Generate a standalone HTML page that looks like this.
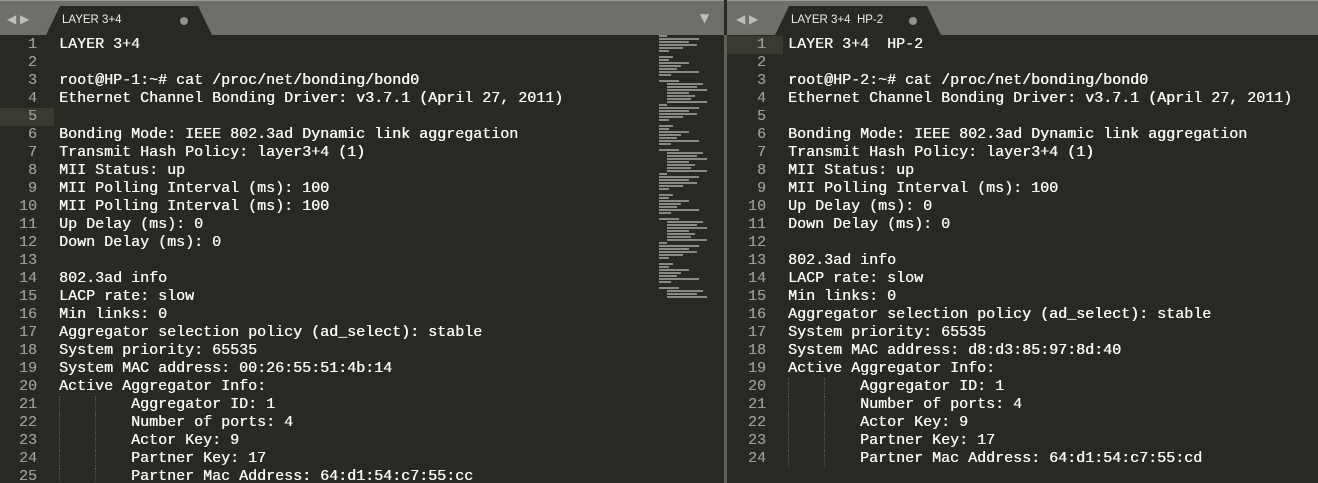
<!DOCTYPE html>
<html><head><meta charset="utf-8"><style>
*{margin:0;padding:0;box-sizing:border-box}
body{width:1318px;height:483px;overflow:hidden;background:#282923;font-family:"Liberation Mono",monospace;position:relative}
.bar{position:absolute;top:0;height:35px;background:#6e6f69;border-top:1px solid #9a9a9a}
.tab{position:absolute;top:6px;height:29px;background:#282923;clip-path:polygon(0 100%,14px 0,calc(100% - 14px) 0,100% 100%)}
.tab span{position:absolute;top:8px;font:11.5px "Liberation Sans",sans-serif;color:#ececec}
.dot{position:absolute;top:11px;width:8px;height:8px;border-radius:50%;background:#909090}
.arr{position:absolute;top:12px;color:#bdbdbd;font-size:12px;font-family:"DejaVu Sans",sans-serif}
.pane{position:absolute;top:36px;bottom:0;overflow:hidden}
.ln{position:absolute;height:18px;line-height:18px;font-size:15px;color:#9a9b95;text-align:right;text-shadow:0.3px 0 0 #9a9b95}
.tx{position:absolute;height:18px;line-height:18px;font-size:15px;color:#fafaf4;white-space:pre;text-shadow:0.4px 0 0 #fafaf4}
.hl{position:absolute;height:18px;background:#3b3a32}
.g{position:absolute;width:0;border-left:1px dotted #555;height:18px}
.mm{position:absolute;height:2px;background:#8a8a85}
</style></head><body>
<div class="bar" style="left:0;width:724px"></div>
<div class="bar" style="left:727px;width:591px"></div>
<div class="arr" style="left:7px">◀</div><div class="arr" style="left:20px">▶</div>
<div class="tab" style="left:46px;width:166px"><span style="left:16px">LAYER 3+4</span><div class="dot" style="left:134px"></div></div>
<div class="arr" style="left:700px;top:11px;font-size:12px">▼</div>
<div class="arr" style="left:736px">◀</div><div class="arr" style="left:749px">▶</div>
<div class="tab" style="left:775px;width:166px"><span style="left:16px">LAYER 3+4&nbsp; HP-2</span><div class="dot" style="left:134px"></div></div>
<div style="position:absolute;left:724px;top:35px;width:3px;bottom:0;background:#5e5f5a"></div>
<div style="position:absolute;left:727px;top:35px;width:591px;bottom:0;background:#282923"></div>
<div id="L" class="pane" style="left:0;width:724px"></div>
<div id="R" class="pane" style="left:727px;width:591px"></div>
<div id="M" style="position:absolute;left:659px;top:35px;width:56px;height:270px"></div>
<script>
const L=["LAYER 3+4","","root@HP-1:~# cat /proc/net/bonding/bond0","Ethernet Channel Bonding Driver: v3.7.1 (April 27, 2011)","","Bonding Mode: IEEE 802.3ad Dynamic link aggregation","Transmit Hash Policy: layer3+4 (1)","MII Status: up","MII Polling Interval (ms): 100","MII Polling Interval (ms): 100","Up Delay (ms): 0","Down Delay (ms): 0","","802.3ad info","LACP rate: slow","Min links: 0","Aggregator selection policy (ad_select): stable","System priority: 65535","System MAC address: 00:26:55:51:4b:14","Active Aggregator Info:","\t\tAggregator ID: 1","\t\tNumber of ports: 4","\t\tActor Key: 9","\t\tPartner Key: 17","\t\tPartner Mac Address: 64:d1:54:c7:55:cc"];
const R=["LAYER 3+4  HP-2","","root@HP-2:~# cat /proc/net/bonding/bond0","Ethernet Channel Bonding Driver: v3.7.1 (April 27, 2011)","","Bonding Mode: IEEE 802.3ad Dynamic link aggregation","Transmit Hash Policy: layer3+4 (1)","MII Status: up","MII Polling Interval (ms): 100","Up Delay (ms): 0","Down Delay (ms): 0","","802.3ad info","LACP rate: slow","Min links: 0","Aggregator selection policy (ad_select): stable","System priority: 65535","System MAC address: d8:d3:85:97:8d:40","Active Aggregator Info:","\t\tAggregator ID: 1","\t\tNumber of ports: 4","\t\tActor Key: 9","\t\tPartner Key: 17","\t\tPartner Mac Address: 64:d1:54:c7:55:cd"];
function fill(id,lines,hl,lnRight,tx){let h="";lines.forEach((s,i)=>{const y=i*18;
if(i+1===hl)h+=`<div class="hl" style="left:0;top:${y}px;width:${lnRight+17}px"></div>`;
h+=`<div class="ln" style="left:0;width:${lnRight}px;top:${y}px">${i+1}</div>`;
let t=s;if(s.startsWith("\t\t")){t="        "+s.slice(2);h+=`<div class="g" style="left:${tx}px;top:${y}px"></div><div class="g" style="left:${tx+36}px;top:${y}px"></div>`;}
h+=`<div class="tx" style="left:${tx}px;top:${y}px">${t}</div>`;});
document.getElementById(id).innerHTML=h;}
fill("L",L,5,37,59);fill("R",R,1,39,61);
let m="";const ws=[8,40,30,38,24,10,0,14,10,30,22,18,40,12,0,20,36,30,40,22,28,24,40];let y=0;
for(let k=0;k<88;k++){const w=ws[k%ws.length];if(w)m+=`<div class="mm" style="left:${(k%23>15?8:0)}px;top:${y}px;width:${Math.min(w,54)}px"></div>`;y+=3;}
document.getElementById("M").innerHTML=m;
</script>
</body></html>
